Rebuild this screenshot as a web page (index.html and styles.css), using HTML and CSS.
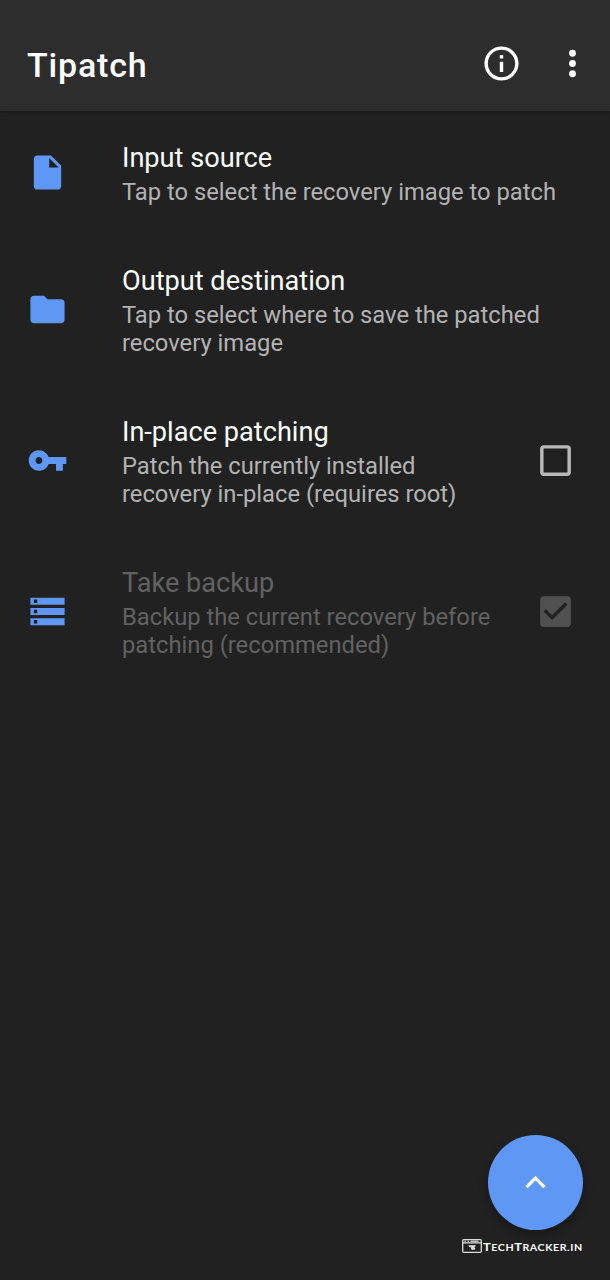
FILE: index.html
```
<!DOCTYPE html>
<html lang="en">
<head>
<meta charset="utf-8">
<title>Tipatch</title>
<link rel="stylesheet" href="styles.css">
</head>
<body>
<div class="screen">
  <header class="toolbar">
    <h1 class="toolbar-title">Tipatch</h1>
    <svg class="icon info" viewBox="0 0 24 24"><path d="M11 7h2v2h-2zM11 11h2v6h-2zM12 2C6.48 2 2 6.48 2 12s4.480 10 10 10 10-4.480 10-10S17.520 2 12 2zm0 18c-4.410 0-8-3.590-8-8s3.590-8 8-8 8 3.590 8 8-3.590 8-8 8z"/></svg>
    <svg class="icon more" viewBox="0 0 24 24"><circle cx="12" cy="6" r="2"/><circle cx="12" cy="12" r="2"/><circle cx="12" cy="18" r="2"/></svg>
  </header>
  <main class="list">
    <section class="row">
      <svg class="icon accent" viewBox="0 0 24 24"><path d="M6 2c-1.100 0-2 .900-2 2v16c0 1.100.900 2 2 2h12c1.100 0 2-.900 2-2V8l-6-6H6zm7 7V3.500L18.500 9H13z"/></svg>
      <div class="text"><h2 class="title">Input source</h2><p class="summary">Tap to select the recovery image to patch</p></div>
    </section>
    <section class="row">
      <svg class="icon accent" viewBox="0 0 24 24"><path d="M10 4H4c-1.100 0-2 .900-2 2v12c0 1.100.900 2 2 2h16c1.100 0 2-.900 2-2V8c0-1.100-.900-2-2-2h-8l-2-2z"/></svg>
      <div class="text"><h2 class="title">Output destination</h2><p class="summary">Tap to select where to save the patched<br>recovery image</p></div>
    </section>
    <section class="row">
      <svg class="icon accent" viewBox="0 0 24 24"><path d="M12.650 10C11.830 7.670 9.610 6 7 6c-3.310 0-6 2.690-6 6s2.690 6 6 6c2.610 0 4.830-1.670 5.650-4H17v4h4v-4h2v-4H12.650zM7 14c-1.100 0-2-.900-2-2s.900-2 2-2 2 .900 2 2-.900 2-2 2z"/></svg>
      <div class="text"><h2 class="title">In-place patching</h2><p class="summary">Patch the currently installed<br>recovery in-place (requires root)</p></div>
      <svg class="icon check" viewBox="0 0 24 24"><path d="M19 5v14H5V5h14m0-2H5c-1.100 0-2 .900-2 2v14c0 1.100.900 2 2 2h14c1.100 0 2-.900 2-2V5c0-1.100-.900-2-2-2z"/></svg>
    </section>
    <section class="row disabled">
      <svg class="icon accent" viewBox="0 0 24 24"><path d="M2 20h20v-4H2v4zm2-3h2v2H4v-2zM2 4v4h20V4H2zm4 3H4V5h2v2zm-4 7h20v-4H2v4zm2-3h2v2H4v-2z"/></svg>
      <div class="text"><h2 class="title">Take backup</h2><p class="summary">Backup the current recovery before<br>patching (recommended)</p></div>
      <svg class="icon check" viewBox="0 0 24 24"><path d="M19 3H5c-1.110 0-2 .900-2 2v14c0 1.100.890 2 2 2h14c1.110 0 2-.900 2-2V5c0-1.100-.890-2-2-2zm-9 14l-5-5 1.410-1.410L10 14.170l7.590-7.590L19 8l-9 9z"/></svg>
    </section>
  </main>
  <footer class="bottom">
    <div class="fab"><svg class="icon" viewBox="0 0 24 24"><path d="M12 8l-6 6 1.410 1.410L12 10.830l4.590 4.580L18 14z"/></svg></div>
    <div class="brand">
      <svg class="brand-logo" viewBox="0 0 20 14"><path class="brand-frame" d="M1.700.7h16.600q1 0 1 1v10.600q0 1-1 1H1.700q-1 0-1-1V1.700q0-1 1-1zM.7 3.800h18.600"/><path class="brand-dots" d="M2.500 2.200h1.500M5.500 2.200h1.500M8.500 2.200h8"/><path class="brand-mark" d="M6.500 6.300h7v1.500l-1.200.2 1 1.500-.8 1.500-1.500-.5-1 .8-1-1.500.3-1.300-2.300-.5z"/></svg>
      <span class="brand-name">T<small>ECH</small>T<small>RACKER.IN</small></span>
    </div>
  </footer>
</div>
</body>
</html>
```
FILE: styles.css
```
body {
  margin: 0;
  background: #212121;
  font-family: Roboto, sans-serif;
  color: #fff;
}
.screen {
  display: flex;
  flex-direction: column;
  width: 610px;
  height: 1280px;
  overflow: hidden;
}
.toolbar {
  box-sizing: border-box;
  display: flex;
  align-items: center;
  height: 111px;
  padding: 16px 17px 1px 27px;
  background: #2d2d2d;
  box-shadow: 0 1px 3px rgba(0, 0, 0, 0.35);
}
.toolbar-title {
  flex: 1;
  margin: 0;
  padding-top: 4px;
  font-size: 34px;
  line-height: 40px;
  font-weight: 500;
  letter-spacing: 0.8px;
}
.icon {
  display: block;
  flex: none;
  width: 41px;
  height: 41px;
  fill: #fff;
}
.more {
  margin-left: 30px;
}
.list {
  flex: 1;
}
.row {
  display: flex;
  align-items: center;
  padding: 31px 34px 28px 27px;
}
.row > .icon {
  margin: -6px 0 -3px;
}
.accent {
  fill: #5e97f6;
}
.text {
  flex: 1;
  margin-left: 54px;
  white-space: nowrap;
}
.title {
  margin: 0 0 4px;
  font-size: 27.15px;
  line-height: 32px;
  font-weight: 400;
}
.summary {
  margin: 0;
  font-size: 23.76px;
  line-height: 28px;
  color: #b3b3b3;
}
.check {
  fill: #b9b9b9;
}
.disabled .title,
.disabled .summary {
  color: #626262;
}
.disabled .check {
  fill: #505050;
}
.bottom {
  display: flex;
  flex-direction: column;
  align-items: flex-end;
  padding: 0 27px 26px 0;
}
.fab {
  display: flex;
  align-items: center;
  justify-content: center;
  width: 95px;
  height: 95px;
  border-radius: 50%;
  background: #5e97f6;
  box-shadow: 0 5px 10px rgba(0, 0, 0, 0.28);
}
.brand {
  display: flex;
  align-items: center;
  gap: 1px;
  height: 16px;
  margin-top: 8px;
}
.brand-logo {
  width: 20px;
  height: 14px;
  fill: none;
}
.brand-frame {
  stroke: #ddd;
  stroke-width: 1.3;
}
.brand-dots {
  stroke: #bbb;
  stroke-width: 1.5;
}
.brand-mark {
  fill: #ddd;
}
.brand-name {
  width: 100px;
  padding-top: 2px;
  font: 700 11.5px/16px Lato, sans-serif;
  letter-spacing: 0.5px;
  white-space: nowrap;
  transform: scaleX(1.12);
  transform-origin: left;
}
.brand-name small {
  font-size: 9.500px;
}
```
